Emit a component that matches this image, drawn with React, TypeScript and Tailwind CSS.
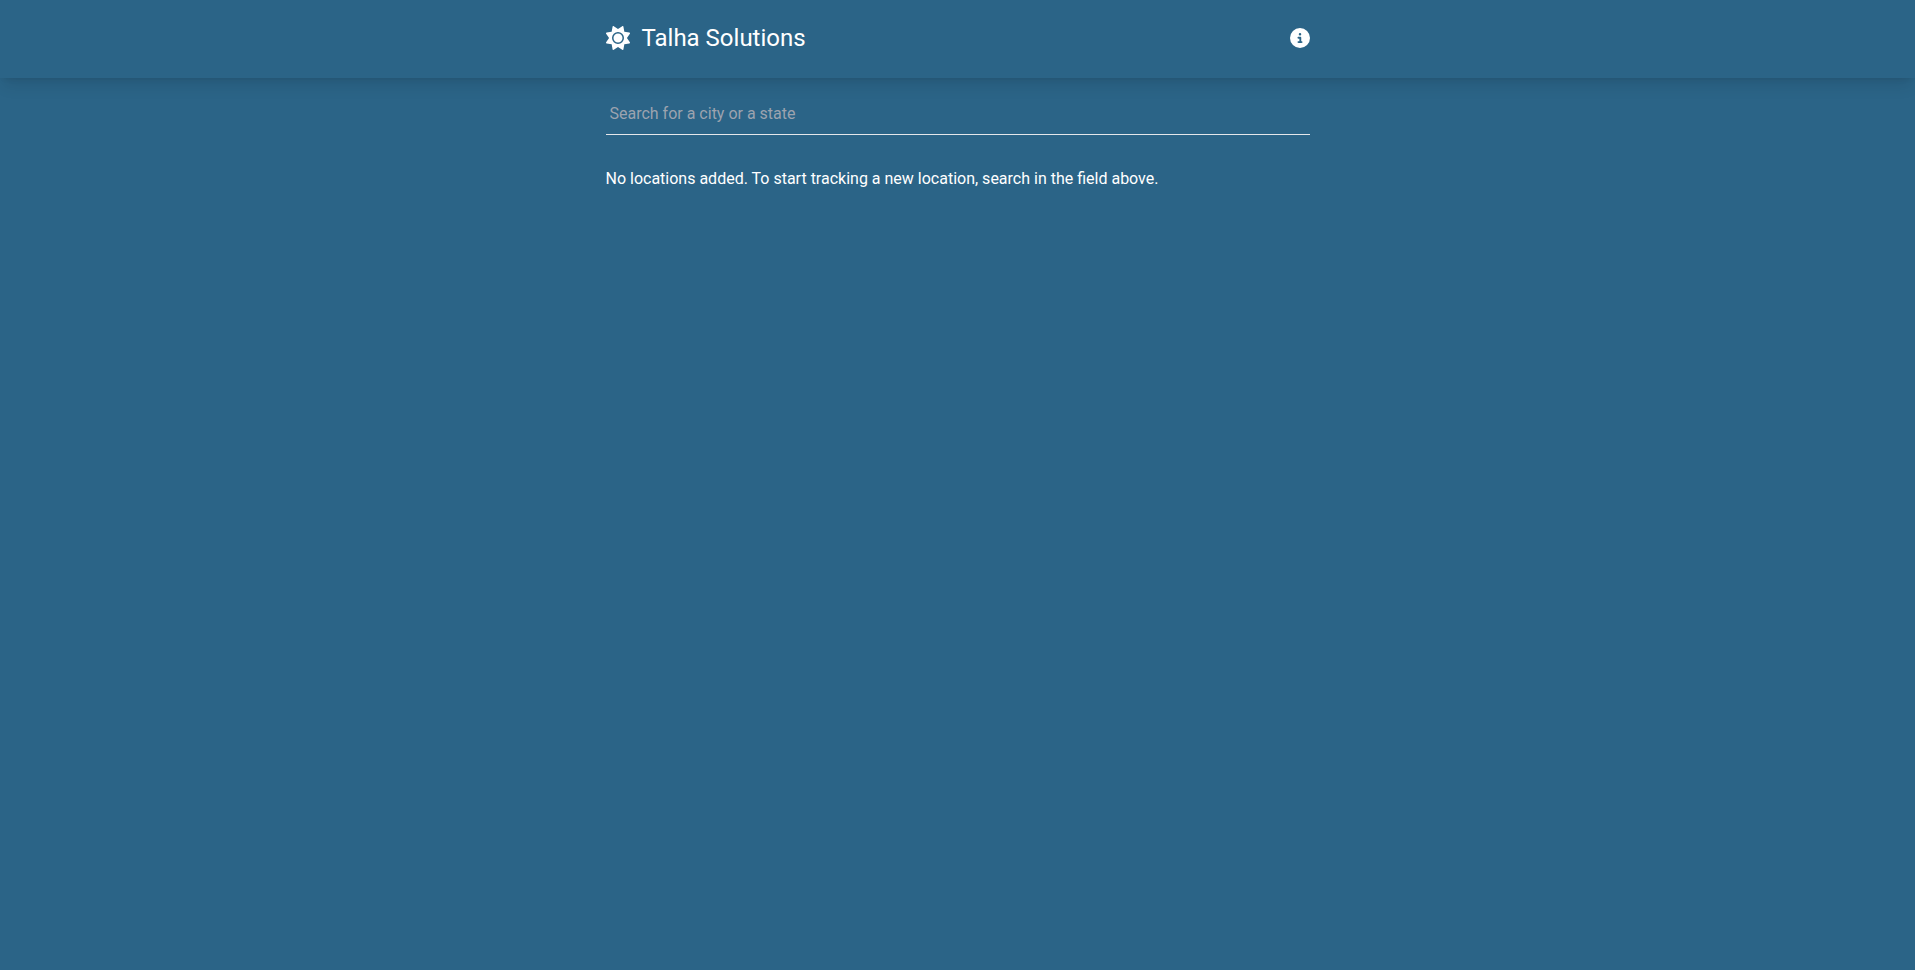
import React from "react";
import { FaSun, FaCircleInfo } from "react-icons/fa6";

function SiteHeader() {
  return (
    <header className="sticky top-0 bg-[#2b6487] shadow-lg">
      <nav className="mx-auto flex max-w-3xl items-center justify-between px-8 pt-[22px] pb-6 text-white">
        <a href="#" className="flex items-center gap-3">
          <FaSun className="size-6" aria-hidden="true" />
          <span className="text-2xl">Talha Solutions</span>
        </a>
        <button type="button" aria-label="About">
          <FaCircleInfo className="size-5" />
        </button>
      </nav>
    </header>
  );
}

export default function App() {
  return (
    <div className="min-h-screen bg-[#2b6487] font-[Roboto,sans-serif] text-white">
      <SiteHeader />
      <main className="mx-auto max-w-3xl px-8">
        <input
          type="text"
          aria-label="Search for a city or a state"
          placeholder="Search for a city or a state"
          className="mt-4 mb-8 w-full border-b border-[#e5e7eb] bg-transparent px-1 py-2 placeholder:text-[#9ca3af] focus:outline-none"
        />
        <p>No locations added. To start tracking a new location, search in the field above.</p>
      </main>
    </div>
  );
}
